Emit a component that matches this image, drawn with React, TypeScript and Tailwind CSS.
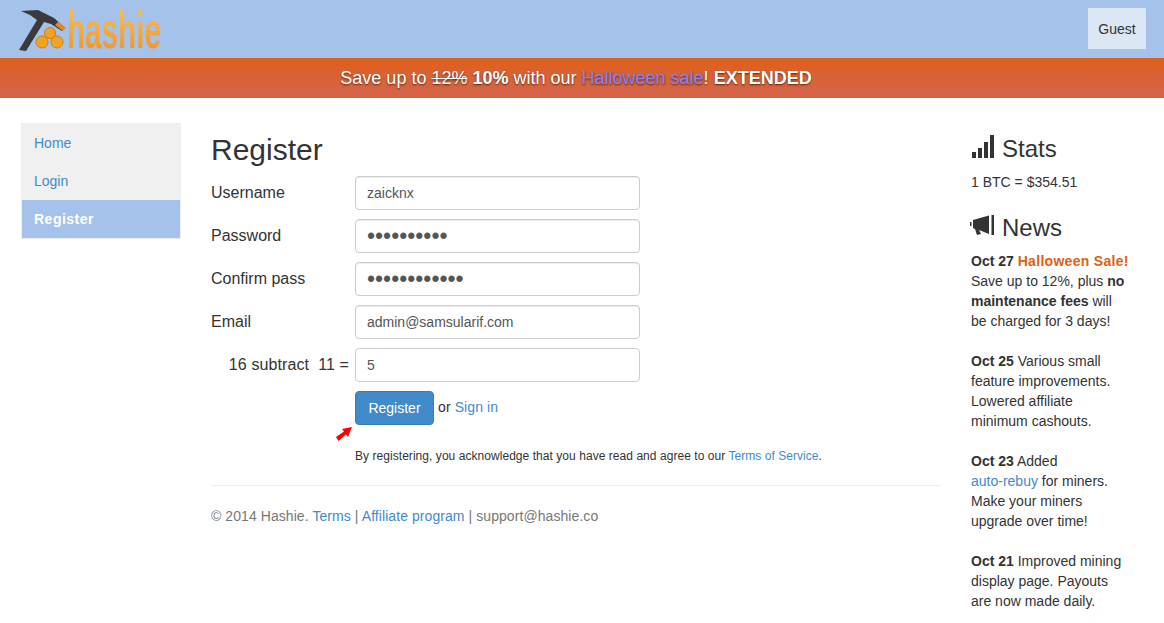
const Logo = () => (
  <div className="flex items-start h-[58px]">
    <svg width="48" height="44" viewBox="0 0 48 44" className="mt-[8px] ml-[18px] shrink-0">
      <path d="M3 3 L20 2 L36 10 L47 20 L44 23 L33 16 L26 14 L8 43 L1 42 L19 12 L12 7 Z" fill="#3a3a3c" />
      <path d="M40 14 L48 20 L45 23 L37 17 Z" fill="#e08a20" />
      <circle cx="32" cy="25" r="5.5" fill="#f2a31f" stroke="#c9801a" />
      <circle cx="24" cy="34" r="6" fill="#f2a31f" stroke="#c9801a" />
      <circle cx="39" cy="34" r="6" fill="#f2a31f" stroke="#c9801a" />
    </svg>
    <span className="mt-[1px] ml-[1px] text-[52px] leading-[58px] font-bold font-['Liberation_Sans',sans-serif] inline-block origin-left scale-x-[0.57] bg-gradient-to-b from-[#f7c45c] to-[#ee8f1c] bg-clip-text text-transparent">
      hashie
    </span>
  </div>
);

const Field = ({ label, value, type = 'text' }: { label: string; value: string; type?: string }) => (
  <div className="flex items-center h-[34px] mb-[9px]">
    <label className="w-[144px] text-[16px] text-[#333]">{label}</label>
    <input
      type={type}
      defaultValue={value}
      readOnly
      className={`w-[285px] h-[34px] pl-[11px] pr-3 border border-[#ccc] rounded bg-white text-[#555] shadow-[inset_0_1px_1px_rgba(0,0,0,0.075)] outline-none ${
        type === 'password' ? 'text-[23px]' : 'text-[14px]'
      }`}
    />
  </div>
);

const NewsItem = ({ date, children }: { date: string; children: React.ReactNode }) => (
  <p className="mb-5">
    <b>{date}</b> {children}
  </p>
);

export default function App() {
  return (
    <div className="h-[623px] overflow-hidden bg-white text-[14px] leading-5 text-[#333] font-['Liberation_Sans',Arial,sans-serif]">
      <header className="h-[58px] bg-[#a4c2ea] flex justify-between">
        <Logo />
        <div className="mt-2 mr-[18px] w-[58px] h-[41px] bg-[#dce7f6] flex items-center justify-center text-[#333]">
          Guest
        </div>
      </header>
      <div className="h-10 pr-3 bg-gradient-to-b from-[#de6018] to-[#d4644a] flex items-center justify-center text-white text-[18px] [text-shadow:0_1px_2px_rgba(0,0,0,0.6)]">
        <span>
          Save up to <s>12%</s> <b>10%</b> with our <span className="text-[#8e82f2]">Halloween sale</span>! <b>EXTENDED</b>
        </span>
      </div>

      <div className="flex pt-[25px] pl-[21px]">
        <nav className="w-[160px] h-[116px] bg-[#f0f0f0] border border-[#eee] shrink-0">
          <div className="h-[38px] flex items-center px-3 text-[#428bca]">Home</div>
          <div className="h-[38px] flex items-center px-3 text-[#428bca]">Login</div>
          <div className="h-[38px] flex items-center px-3 bg-[#a4c2ea] text-white font-bold tracking-[0.5px]">Register</div>
        </nav>

        <main className="w-[730px] ml-[30px] shrink-0">
          <h1 className="text-[30px] leading-[33px] mt-[10px] mb-[10px] font-normal">Register</h1>
          <Field label="Username" value="zaicknx" />
          <Field label="Password" value="aaaaaaaaaa" type="password" />
          <Field label="Confirm pass" value="aaaaaaaaaaaa" type="password" />
          <Field label="Email" value="admin@samsularif.com" />
          <div className="flex items-center h-[34px] mb-[9px]">
            <label className="w-[138px] mr-[6px] text-[16px] text-right whitespace-pre tracking-[0.1px]">16 subtract  11 =</label>
            <input
              defaultValue="5"
              readOnly
              className="w-[285px] h-[34px] pl-[11px] pr-3 border border-[#ccc] rounded bg-white text-[14px] text-[#555] outline-none"
            />
          </div>
          <div className="relative pl-[144px] flex items-start">
            <button className="w-[79px] h-[34px] bg-[#428bca] border border-[#357ebd] rounded text-white text-[14px]">
              Register
            </button>
            <span className="ml-1 mt-[6px] tracking-[0.1px]">
              or <span className="text-[#428bca]">Sign in</span>
            </span>
            <svg width="18" height="16" viewBox="0 0 18 16" className="absolute left-[124px] top-[35px]">
              <path d="M17 1 L7 3 L9 5.5 L1 11 L3.5 15 L11 8.5 L13 11 Z" fill="#f00" />
            </svg>
          </div>
          <p className="mt-[21px] text-[12px] leading-[20px] pl-[144px] text-[#333] tracking-[0.05px]">
            By registering, you acknowledge that you have read and agree to our{' '}
            <span className="text-[#428bca]">Terms of Service</span>.
          </p>
          <hr className="mt-[19px] border-[#eee]" />
          <p className="mt-[20px] text-[#777] tracking-[0.07px]">
            © 2014 Hashie. <span className="text-[#428bca]">Terms</span> | <span className="text-[#428bca]">Affiliate program</span> | support@hashie.co
          </p>
        </main>

        <aside className="w-[159px] ml-[30px] shrink-0">
          <h3 className="text-[24px] leading-[26px] mt-[13px] mb-[10px] flex items-center">
            <svg width="24" height="24" viewBox="0 0 24 24" className="mr-[7px] -mt-[6px]">
              <rect x="1" y="18" width="4" height="6" fill="#333" />
              <rect x="7" y="14" width="4" height="10" fill="#333" />
              <rect x="13" y="8" width="4" height="16" fill="#333" />
              <rect x="19" y="1" width="4" height="23" fill="#333" />
            </svg>
            Stats
          </h3>
          <p className="mb-[23px]">1 BTC = $354.51</p>
          <h3 className="text-[24px] leading-[26px] mb-[10px] flex items-center -ml-[1px]">
            <svg width="26" height="22" viewBox="0 0 26 22" className="mr-[6px] -mt-1">
              <rect x="0" y="7" width="1.5" height="4" fill="#333" />
              <path d="M3 5 L19 0.5 L19 19 L9 15 L11 19 L7 20 L5 14 L3 13 Z" fill="#333" />
              <rect x="21.5" y="0" width="2.5" height="20" fill="#333" />
            </svg>
            News
          </h3>
          <NewsItem date="Oct 27">
            <b className="text-[#e0600f] tracking-[0.3px]">Halloween Sale!</b>
            <br />
            Save up to 12%, plus <b>no maintenance fees</b> will be charged for 3 days!
          </NewsItem>
          <NewsItem date="Oct 25">Various small feature improvements. Lowered affiliate minimum cashouts.</NewsItem>
          <NewsItem date="Oct 23">
            Added
            <br />
            <span className="text-[#428bca]">auto-rebuy</span> for miners. Make your miners upgrade over time!
          </NewsItem>
          <NewsItem date="Oct 21">Improved mining display page. Payouts are now made daily.</NewsItem>
        </aside>
      </div>
    </div>
  );
}
